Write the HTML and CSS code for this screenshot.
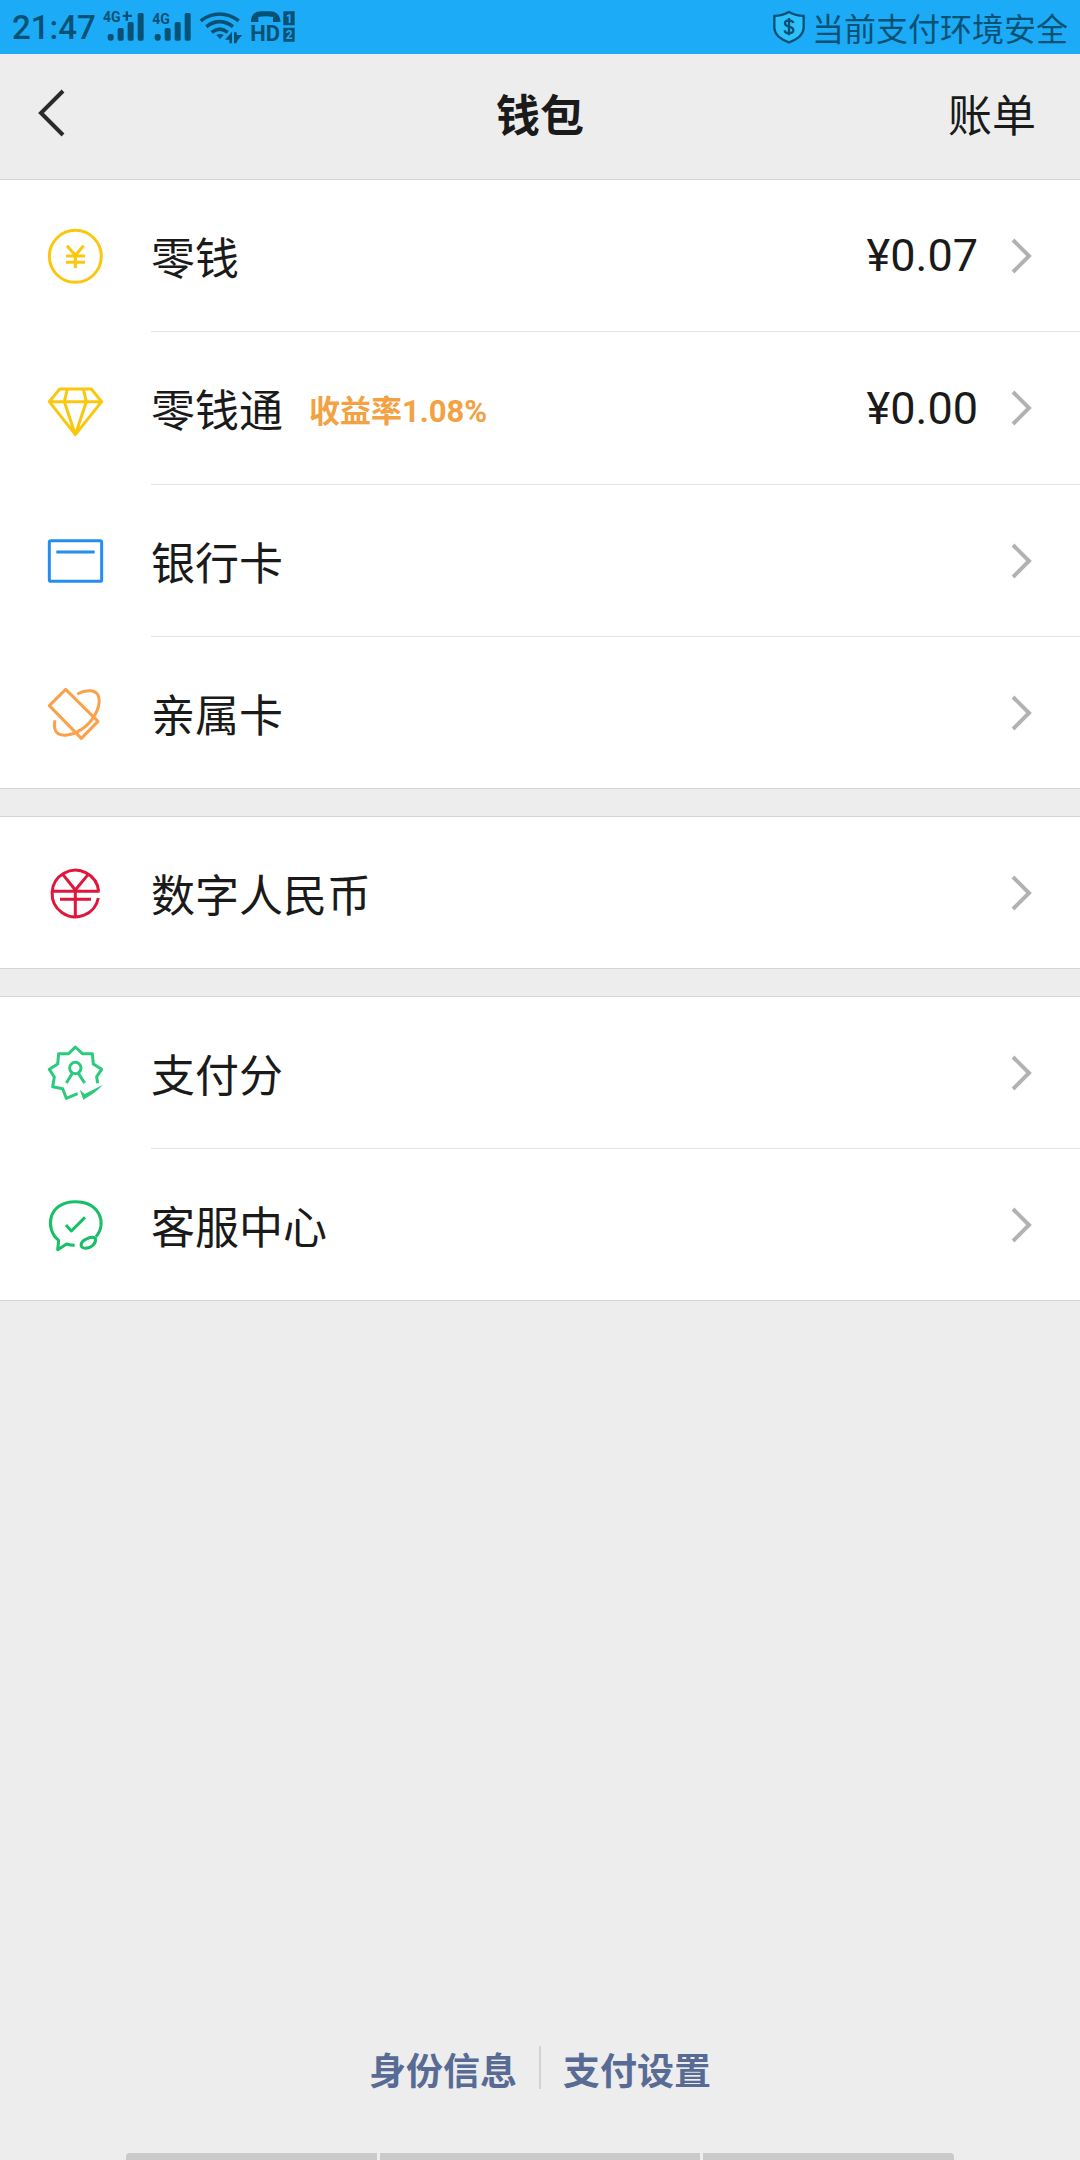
FILE: index.html
```html
<!DOCTYPE html>
<html lang="zh-CN">
<head>
<meta charset="utf-8">
<meta name="viewport" content="width=device-width, initial-scale=1">
<title>钱包</title>
<link rel="stylesheet" href="styles.css">
</head>
<body>
<div class="status">
  <div class="status-side">
    <span class="time">21:47</span>
    <svg width="42" height="36" viewBox="310 27 126 108" fill="currentColor" aria-hidden="true">
      <text class="net" x="310" y="67">4G</text>
      <path d="M369 44h9v-10h7v10h12v7h-12v11h-7v-11h-9z"/>
      <rect x="324" y="102" width="18" height="20" rx="7"/><rect x="354" y="84" width="18" height="38" rx="5"/>
      <rect x="384" y="66" width="18" height="56" rx="5"/><rect x="414" y="39" width="18" height="83" rx="5"/>
    </svg>
    <svg width="40" height="36" viewBox="454 27 120 108" fill="currentColor" aria-hidden="true">
      <text class="net" x="455" y="71">4G</text>
      <rect x="462" y="102" width="18" height="20" rx="7"/><rect x="492" y="84" width="18" height="38" rx="5"/>
      <rect x="522" y="66" width="18" height="56" rx="5"/><rect x="552" y="39" width="18" height="83" rx="5"/>
    </svg>
    <svg width="44" height="36" viewBox="598 27 132 108" fill="none" stroke="currentColor" stroke-width="11" aria-hidden="true">
      <path d="M603 62Q660 22 717 62M620 80Q660 50 700 80M636 97Q660 78 684 97"/>
      <path d="M650 105q10-6 22 0l-11 12z" fill="currentColor" stroke="none"/>
      <path d="M697 95v35h-8v-11h-13zM703 130V97h8v8h17l-14 16-4 9z" fill="currentColor" stroke="none"/>
    </svg>
    <svg width="46" height="36" viewBox="748 27 138 108" fill="currentColor" aria-hidden="true">
      <path d="M751 60q3-26 30-26h26q28 0 32 26v6h-22V51q-22-5-44 0v15h-22z"/>
      <text class="hd" x="749" y="124">HD</text>
      <path d="M848 34h34v42h-34zM848 83h34v42h-34z"/>
      <text class="sim" x="855" y="68">1</text>
      <text class="sim" x="855" y="117">2</text>
    </svg>
  </div>
  <div class="status-side status-safe">
    <svg width="32" height="34" viewBox="40 30 96 102" fill="none" stroke="currentColor" stroke-width="7" aria-hidden="true">
      <path fill="#2ec0fa" d="M88 36Q108 47 132 48V84Q130 112 88 127Q46 112 44 84V48Q68 47 88 36Z"/>
      <path d="M101 69q-2-8-13-8-12 0-12 9 0 7 12 10 13 3 13 11t-13 9q-12 0-13-9M88 54v52"/>
    </svg>
    <span>当前支付环境安全</span>
  </div>
</div>

<header class="bar">
  <button class="back" type="button" aria-label="返回">
    <svg width="28" height="50" viewBox="0 0 28 50" fill="none" stroke="currentColor" stroke-width="4" aria-hidden="true"><path d="M25 3 3 25 25 47"/></svg>
  </button>
  <h1>钱包</h1>
  <a class="bill" href="#bill">账单</a>
</header>

<main>
  <ul class="group">
    <li><a class="row" href="#balance">
      <svg class="icon yellow" viewBox="45 45 180 180" aria-hidden="true"><circle cx="136" cy="136" r="78"/><path d="M111 104l25 29 25-29M108 135h57M108 154h57M136 133v39"/></svg>
      <span class="body"><span class="label">零钱</span><span class="value">¥0.07</span><svg class="chevron" viewBox="0 0 22 36" aria-hidden="true"><path d="M3 2 19 18 3 34"/></svg></span>
    </a></li>
    <li><a class="row row-note" href="#fund">
      <svg class="icon yellow" viewBox="45 504 180 180" aria-hidden="true"><path d="M89 534h95l31 38-79 99-78-99zM58 572h157M112 534l-9 38 33 99 33-99-9-38"/></svg>
      <span class="body"><span class="label">零钱通</span><span class="note">收益率1.08%</span><span class="value">¥0.00</span><svg class="chevron" viewBox="0 0 22 36" aria-hidden="true"><path d="M3 2 19 18 3 34"/></svg></span>
    </a></li>
    <li><a class="row" href="#cards">
      <svg class="icon blue" viewBox="45 61 180 180" aria-hidden="true"><rect x="58" y="90" width="157" height="122" rx="5"/><path d="M79 124h115"/></svg>
      <span class="body"><span class="label">银行卡</span><svg class="chevron" viewBox="0 0 22 36" aria-hidden="true"><path d="M3 2 19 18 3 34"/></svg></span>
    </a></li>
    <li><a class="row" href="#family">
      <svg class="icon orange" viewBox="45 517 180 180" aria-hidden="true"><path d="M107 536 204 632 154 683 58 585zM142 550C166 537 195 536 204 553 216 580 196 622 166 648 130 678 88 680 77 661Q71 650 75 629M139 667 151 657"/></svg>
      <span class="body"><span class="label">亲属卡</span><svg class="chevron" viewBox="0 0 22 36" aria-hidden="true"><path d="M3 2 19 18 3 34"/></svg></span>
    </a></li>
  </ul>
  <ul class="group">
    <li><a class="row" href="#ecny">
      <svg class="icon red" viewBox="45 187 180 180" aria-hidden="true"><path d="M206 272A70 70 0 1 0 205 292M67 272H209M99 222l37 46 38-46M136 266v80M90 296h93"/></svg>
      <span class="body"><span class="label">数字人民币</span><svg class="chevron" viewBox="0 0 22 36" aria-hidden="true"><path d="M3 2 19 18 3 34"/></svg></span>
    </a></li>
  </ul>
  <ul class="group">
    <li><a class="row" href="#score">
      <svg class="icon mint" viewBox="45 67 180 180" aria-hidden="true"><path d="M203 188 200 168 215 146 190 130 187 99 157 99 136 79 116 99 86 99 83 130 58 146 73 169 68 198 98 204 109 233 143 219"/><circle cx="136" cy="142" r="17"/><path d="M127 158 109 187M145 158l19 29"/><path class="solid" d="M149 207l15 13 55-28q-22 24-59 45z"/></svg>
      <span class="body"><span class="label">支付分</span><svg class="chevron" viewBox="0 0 22 36" aria-hidden="true"><path d="M3 2 19 18 3 34"/></svg></span>
    </a></li>
    <li><a class="row" href="#service">
      <svg class="icon green" viewBox="45 523 180 180" aria-hidden="true"><path d="M134 674q-12 0-24-4L83 687 86 659C44 627 52 543 136 543 207 543 233 607 198 648M108 613l16 18 41-41"/><path d="M196 652C200 668 185 682 166 683 147 680 151 664 167 656 180 649 192 650 196 652Z"/></svg>
      <span class="body"><span class="label">客服中心</span><svg class="chevron" viewBox="0 0 22 36" aria-hidden="true"><path d="M3 2 19 18 3 34"/></svg></span>
    </a></li>
  </ul>
</main>

<footer class="foot">
  <nav class="links">
    <a href="#identity">身份信息</a>
    <a href="#settings">支付设置</a>
  </nav>
  <div class="gesture"><i></i><i></i><i></i></div>
</footer>
</body>
</html>
```

FILE: styles.css
```css
* { box-sizing: border-box; }

body {
  margin: 0;
  min-height: 100vh;
  display: flex;
  flex-direction: column;
  background: #ededed;
  color: #1a1a1a;
  font-family: Roboto, "Noto Sans CJK SC", sans-serif;
  font-size: 44px;
}

a { color: inherit; text-decoration: none; }
svg { display: block; flex: none; }

.status {
  height: 54px;
  padding: 0 12px;
  display: flex;
  justify-content: space-between;
  align-items: center;
  background: #1cabf7;
  color: #075274;
}
.status-side { display: flex; align-items: center; gap: 7px; }
.status-safe { font-size: 32px; }
.time { font-size: 33px; font-weight: 500; }
.net { font: 700 42px Roboto, sans-serif; }
.hd { font: 700 66px Roboto, sans-serif; }
.sim { font: 700 36px Roboto, sans-serif; fill: #1cabf7; }

.bar {
  height: 126px;
  padding: 0 38px 8px;
  display: grid;
  grid-template-columns: 1fr auto 1fr;
  align-items: center;
  border-bottom: 1px solid #d5d5d5;
}
.bar h1 { margin: 0; font-size: 44px; font-weight: 700; }
.bill { justify-self: end; padding-right: 6px; }
.back {
  justify-self: start;
  padding: 0;
  border: 0;
  background: none;
  color: #2a2a2a;
}

.group {
  margin: 0 0 27px;
  padding: 0;
  list-style: none;
  background: #fff;
  border-bottom: 1px solid #d5d5d5;
}
.group + .group { border-top: 1px solid #d5d5d5; }
.row {
  height: 152px;
  padding-left: 45px;
  display: flex;
  align-items: center;
  gap: 46px;
}
.row-note { height: 153px; }
.group li:last-child .row { height: 151px; }
.body {
  flex: 1;
  align-self: stretch;
  padding-right: 48px;
  display: flex;
  align-items: center;
  border-bottom: 1px solid #e2e2e2;
}
.group li:last-child .body { border-bottom: 0; }
.note {
  margin-left: 26px;
  font-size: 31px;
  font-weight: 700;
  color: #f2a143;
}
.value { margin-left: auto; font-size: 45px; }
.chevron {
  width: 22px;
  height: 36px;
  margin-left: auto;
  fill: none;
  stroke: #b2b2b2;
  stroke-width: 4;
}
.value + .chevron { margin-left: 32px; }

.icon {
  width: 60px;
  height: 60px;
  fill: none;
  stroke: currentColor;
  stroke-width: 9;
  stroke-linejoin: round;
}
.solid { fill: currentColor; stroke: none; }
.yellow { color: #fac70f; }
.blue { color: #258df0; }
.orange { color: #f9a24a; }
.red { color: #e0173c; }
.mint { color: #2bcb7d; }
.green { color: #15c066; }

.foot { margin-top: auto; }
.links {
  margin-bottom: 64px;
  padding-left: 2px;
  display: grid;
  grid-template-columns: 1fr 1fr;
  font-size: 37px;
  font-weight: 700;
  line-height: 33px;
  color: #576b95;
}
.links a { padding: 10px 22px 0; }
.links a:first-child { text-align: right; border-right: 2px solid #d2d2d2; }
.gesture {
  height: 7px;
  padding: 0 126px;
  display: grid;
  grid-template-columns: 252fr 320fr 252fr;
  gap: 3px;
}
.gesture i { background: #cacaca; }
.gesture i:first-child { border-top-left-radius: 4px; }
.gesture i:last-child { border-top-right-radius: 4px; }
```
